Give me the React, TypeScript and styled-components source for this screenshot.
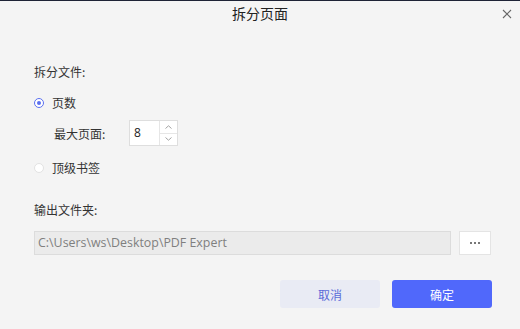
import React from "react";
import styled, { createGlobalStyle } from "styled-components";

const Global = createGlobalStyle`
  html, body { margin: 0; padding: 0; background: #f4f4f4; }
  body { font-family: "Noto Sans CJK SC", "Noto Sans", sans-serif; }
  * { box-sizing: border-box; }
`;

const Dialog = styled.div`
  width: 520px;
  height: 329px;
  background: #f4f4f4;
  border-top: 1px solid #1e2336;
  display: flex;
  flex-direction: column;
`;

const Header = styled.div`
  height: 25px;
  display: grid;
  grid-template-columns: 1fr auto 1fr;
  align-items: center;
`;

const Title = styled.div`
  grid-column: 2;
  font-size: 14px;
  line-height: 25px;
  color: #222;
`;

const Close = styled.button`
  grid-column: 3;
  justify-self: end;
  margin-right: 5px;
  width: 16px;
  height: 16px;
  padding: 0;
  border: none;
  background: transparent;
  display: flex;
  align-items: center;
  justify-content: center;
`;

const Body = styled.div`
  flex: 1;
  padding: 37px 29px 0 34px;
  display: flex;
  flex-direction: column;
`;

const Label = styled.div<{ $mt?: number }>`
  font-size: 12px;
  line-height: 18px;
  color: #333;
  margin-top: ${(p) => p.$mt ?? 0}px;
`;

const RadioRow = styled.label<{ $mt: number }>`
  display: flex;
  align-items: center;
  gap: 8px;
  font-size: 12px;
  line-height: 18px;
  color: #333;
  margin-top: ${(p) => p.$mt}px;
`;

const RadioDot = styled.span<{ $on?: boolean }>`
  width: 10px;
  height: 10px;
  border-radius: 50%;
  border: 1px solid ${(p) => (p.$on ? "#5a6ff0" : "#e2e2e2")};
  background: #fff;
  display: flex;
  align-items: center;
  justify-content: center;
  &::after {
    content: "";
    width: 4px;
    height: 4px;
    border-radius: 50%;
    background: ${(p) => (p.$on ? "#5a6ff0" : "transparent")};
  }
`;

const MaxRow = styled.div`
  display: flex;
  align-items: center;
  margin-top: 8px;
  padding-left: 20px;
  font-size: 12px;
  color: #333;
`;

const MaxLabel = styled.span`
  width: 75px;
`;

const Spin = styled.div`
  display: flex;
  height: 26px;
  border: 1px solid #dedede;
  background: #fff;
`;

const SpinInput = styled.div`
  width: 29px;
  padding-left: 4px;
  font-family: "Open Sans", "Noto Sans", sans-serif;
  font-size: 12px;
  line-height: 24px;
  color: #222;
`;

const SpinBtns = styled.div`
  width: 18px;
  border-left: 1px solid #e6e6e6;
  display: flex;
  flex-direction: column;
`;

const SpinBtn = styled.div<{ $top?: boolean }>`
  flex: 1;
  display: flex;
  align-items: center;
  justify-content: center;
  border-bottom: ${(p) => (p.$top ? "1px solid #e6e6e6" : "none")};
`;

const PathRow = styled.div`
  display: flex;
  gap: 8px;
  margin-top: 12px;
`;

const PathBox = styled.div`
  flex: 1;
  height: 24px;
  border: 1px solid #dcdcdc;
  background: #ebebeb;
  padding-left: 3px;
  font-family: "Open Sans", "Noto Sans", sans-serif;
  font-size: 12.4px;
  line-height: 22px;
  color: #7f7f7f;
`;

const DotsBtn = styled.button`
  width: 32px;
  height: 24px;
  border: 1px solid #e4e4e4;
  background: #fff;
  padding: 0;
  display: flex;
  align-items: center;
  justify-content: center;
  gap: 2px;
`;

const Dot = styled.span`
  width: 2px;
  height: 2px;
  background: #777;
`;

const Footer = styled.div`
  display: flex;
  justify-content: flex-end;
  gap: 12px;
  margin-top: 25px;
  margin-right: -1px;
`;

const Btn = styled.button<{ $primary?: boolean }>`
  width: 100px;
  height: 28px;
  border: none;
  border-radius: 3px;
  font-family: "Noto Sans CJK SC", sans-serif;
  font-size: 12px;
  background: ${(p) => (p.$primary ? "#5068fb" : "#e9ebf4")};
  color: ${(p) => (p.$primary ? "#fff" : "#5b6bd8")};
`;

export default function App() {
  return (
    <>
      <Global />
      <Dialog>
        <Header>
          <Title>拆分页面</Title>
          <Close aria-label="close">
            <svg width="10" height="10" viewBox="0 0 10 10">
              <path d="M1 1L9 9M9 1L1 9" stroke="#666" strokeWidth="1.1" />
            </svg>
          </Close>
        </Header>
        <Body>
          <Label>拆分文件:</Label>
          <RadioRow $mt={13}>
            <RadioDot $on />
            页数
          </RadioRow>
          <MaxRow>
            <MaxLabel>最大页面:</MaxLabel>
            <Spin>
              <SpinInput>8</SpinInput>
              <SpinBtns>
                <SpinBtn $top>
                  <svg width="7" height="4" viewBox="0 0 7 4">
                    <path d="M0.5 3.5L3.5 0.8L6.5 3.5" stroke="#999" fill="none" strokeWidth="0.9" />
                  </svg>
                </SpinBtn>
                <SpinBtn>
                  <svg width="7" height="4" viewBox="0 0 7 4">
                    <path d="M0.5 0.5L3.5 3.2L6.5 0.5" stroke="#999" fill="none" strokeWidth="0.9" />
                  </svg>
                </SpinBtn>
              </SpinBtns>
            </Spin>
          </MaxRow>
          <RadioRow $mt={13}>
            <RadioDot />
            顶级书签
          </RadioRow>
          <Label $mt={24}>输出文件夹:</Label>
          <PathRow>
            <PathBox>C:\Users\ws\Desktop\PDF Expert</PathBox>
            <DotsBtn aria-label="browse">
              <Dot />
              <Dot />
              <Dot />
            </DotsBtn>
          </PathRow>
          <Footer>
            <Btn>取消</Btn>
            <Btn $primary>确定</Btn>
          </Footer>
        </Body>
      </Dialog>
    </>
  );
}
